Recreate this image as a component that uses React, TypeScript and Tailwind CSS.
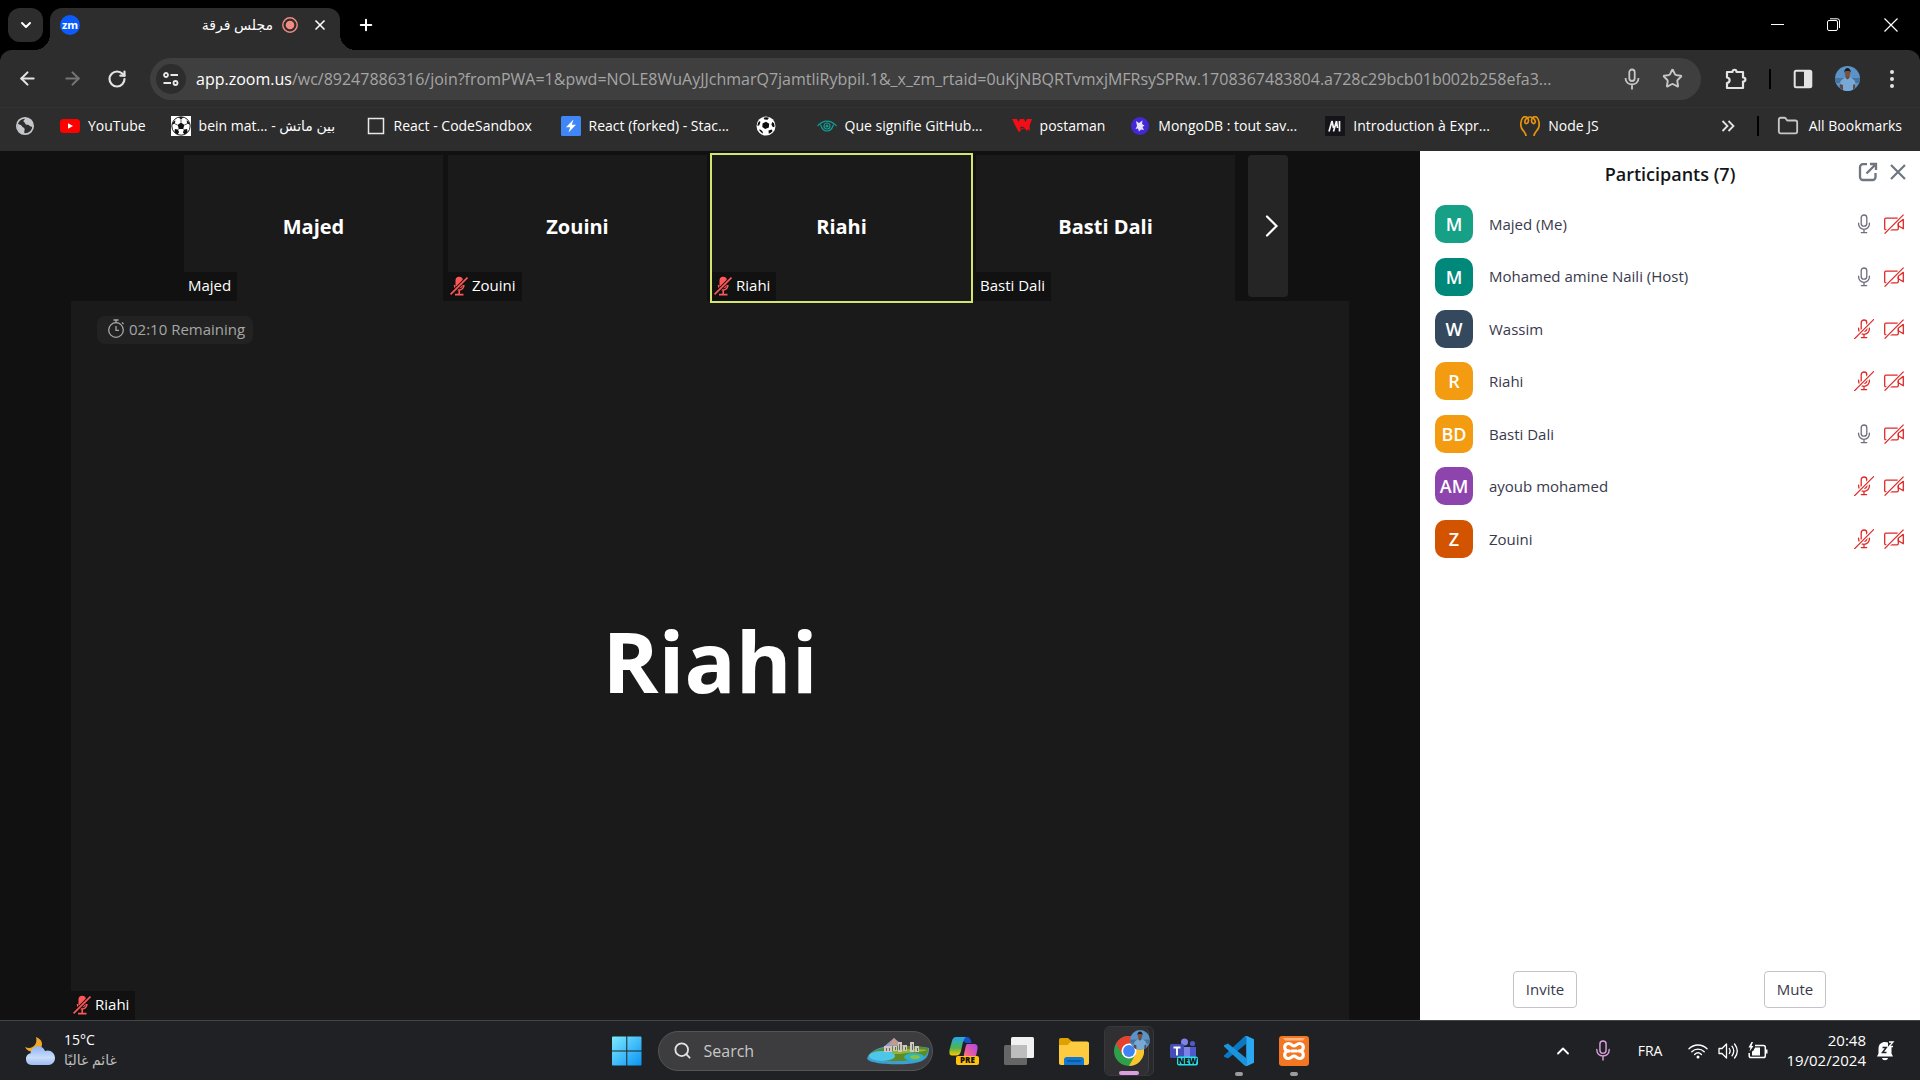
import type { ReactNode } from "react";
import { ArrowLeft, ArrowRight, ChevronDown, ChevronUp, Folder, Plus, RotateCw, Search, Star, X } from "lucide-react";

const UI = "font-['Open_Sans','DejaVu_Sans',sans-serif]";

/* ---------- small drawings ---------- */

function BoxedSoccer() {
  return (
    <svg viewBox="0 0 20 20" className="size-5">
      <rect width="20" height="20" fill="#fff" />
      <circle cx="10" cy="10" r="9.200" fill="#fff" stroke="#1b1b1b" strokeWidth="1" />
      <g fill="#111">
        <path d="M10 6.400l3.400 2.500-1.300 4H7.900l-1.300-4z" />
        <path d="M7.400 1.400L10 3.200l2.600-1.800C11 .7 9 .7 7.400 1.400zM1 8.600l2.800-.8.6-3.400C2.400 5.400 1.200 7 1 8.600zM19 8.600l-2.800-.8-.6-3.400c2 1 3.200 2.600 3.400 4.200zM3.500 16l.4-2.900 3 .4 1.200 2.800-1.600 2.100c-1.200-.5-2.300-1.300-3-2.400zM16.500 16l-.4-2.900-3 .4-1.200 2.800 1.600 2.100c1.200-.5 2.300-1.300 3-2.400z" />
      </g>
      <path d="M10 3.200v3.200M3.800 7.800l2.800 1.100M16.200 7.800l-2.800 1.100M6.900 13.500l1-.6M13.100 13.500l-1-.6" stroke="#333" strokeWidth=".8" />
    </svg>
  );
}

function Soccer() {
  return (
    <svg viewBox="0 0 20 20" className="size-5">
      <circle cx="10" cy="10" r="9.500" fill="#fff" />
      <g fill="#0c0c0c">
        <path d="M6.500 7.500l3.500-1.700 3.200 2-.4 3.700-3.600 1.500-2.900-2z" />
        <path d="M7.500 1.800c1.800-.8 4-.7 5.500 0L11.500 3.800 8.500 3.600zM16.200 6l1.800 1.200.7 3.300-1.700.8-1.600-2.500zM12.500 14.500l3.200-1 .8 1.500c-1 1.400-2.300 2.300-3.700 2.800zM3.800 13.200l2.500 1.800.8 2.500C5.500 16.900 4 15.500 3.200 14zM3.200 5.200l1.300.5-1.200 3.500-1.800.8c0-1.800.6-3.500 1.700-4.800z" />
      </g>
    </svg>
  );
}

function Globe() {
  return (
    <svg viewBox="0 0 20 20" className="size-5">
      <circle cx="10" cy="10" r="8.200" fill="none" stroke="#c4c7cc" strokeWidth="1.700" />
      <path d="M2.500 7.500C4 9 6.500 8.500 7 10.200c.4 1.500 2.600 1 2.600 2.800 0 1.300-.5 2.200-.2 4.600C5 17.500 2 14 2.500 7.500zM10.500 2c-.5 1.500-2 1.800-2 3.200 0 1.300 1.600.9 1.600 2 0 1 1.200 1.500 2.800 1.500 1.200 0 1.600 1.500 3 1.800l2 .5C18 6 15 2.500 10.500 2z" fill="#c4c7cc" />
    </svg>
  );
}

function Person({ className }: { className?: string }) {
  return (
    <svg viewBox="0 0 25 25" className={className}>
      <defs>
        <clipPath id="face"><circle cx="12.500" cy="12.500" r="12.500" /></clipPath>
      </defs>
      <g clipPath="url(#face)">
        <rect width="25" height="25" fill="#5b93c8" />
        <rect y="12" width="25" height="5" fill="#47739c" />
        <path d="M4 25l1.500-10 5-4h5l4.500 4 1.500 10z" fill="#78a9d6" />
        <path d="M4 25l1-7 3 1v6zM21 25l-1-7-2 1v6z" fill="#5a4a48" />
        <path d="M10.500 9h4v3l-2 1.500-2-1.500z" fill="#704a3a" />
        <ellipse cx="12.500" cy="6.500" rx="2.800" ry="3.800" fill="#7a5240" />
        <path d="M9.200 6.500c0-6 6.600-6 6.600 0l-1.300-1.500h-4z" fill="#1d1a1d" />
      </g>
    </svg>
  );
}

function Mic({ muted }: { muted: boolean }) {
  return (
    <svg viewBox="0 0 20 20" className="size-5" fill="none" stroke={muted ? "#e02828" : "#6e6e7d"} strokeWidth="1.300" strokeLinecap="round">
      <rect x="7.200" y="1" width="5.600" height="11.200" rx="2.800" />
      <path d="M4.600 9.200v.8a5.400 5.400 0 0 0 10.800 0v-.8M10 15.400v3M7.300 18.600h5.400" />
      {muted && <path d="M.8 19.400L19.600.6" stroke="#fff" strokeWidth="3.400" />}
      {muted && <path d="M.6 19.600L19.600.6" />}
    </svg>
  );
}

function CamOff() {
  return (
    <svg viewBox="0 0 20 20" className="size-5" fill="none" stroke="#e02828" strokeWidth="1.300" strokeLinejoin="round">
      <rect x=".7" y="4.200" width="13.600" height="11.600" rx="1.200" />
      <path d="M14.300 9l5-3.600v9.400l-5-3z" />
      <path d="M1.200 19.200L19.400 1" stroke="#fff" strokeWidth="3.400" />
      <path d="M.6 19.600L19.600.6" />
    </svg>
  );
}

function MutedSolid() {
  return (
    <svg viewBox="0 0 18 20" className="h-5 w-[18px] shrink-0">
      <g fill="none" stroke="#ff5757" strokeWidth="1.600">
        <rect x="5.500" y=".8" width="7.400" height="11.500" rx="3.700" fill="#ff5757" stroke="none" />
        <path d="M4.500 9c0 6.600 9.400 6.600 9.400 0M9.200 14v4.200M5 18.600h8.500" />
        <path d="M.5 18.500L17.500 1.500" stroke="#111" strokeWidth="3.600" />
        <path d="M.6 18.400L17.500 1.500" strokeWidth="1.700" />
      </g>
    </svg>
  );
}

/* ---------- browser chrome ---------- */

type Mark = { label?: string; icon: ReactNode; long?: boolean };

const bookmarks: Mark[] = [
  {
    label: "YouTube",
    icon: (
      <svg viewBox="0 0 20 20" className="size-5"><rect y="3" width="20" height="14" rx="3.500" fill="#f00" /><path d="M8 7.200v5.600l5-2.800z" fill="#fff" /></svg>
    ),
  },
  { label: "bein mat... - بين ماتش", icon: <BoxedSoccer />, long: true },
  {
    label: "React - CodeSandbox",
    long: true,
    icon: <svg viewBox="0 0 20 20" className="size-5"><rect x="2.500" y="2.500" width="15" height="15" fill="none" stroke="#e8e8e8" strokeWidth="1.500" /></svg>,
  },
  {
    label: "React (forked) - Stac...",
    long: true,
    icon: <svg viewBox="0 0 20 20" className="size-5"><rect width="20" height="20" rx="1.500" fill="#3f86f7" /><path d="M12.500 3.500L5 11.200h4.200L7.500 16.500 15 8.800h-4.200z" fill="#fff" /></svg>,
  },
  { icon: <Soccer /> },
  {
    label: "Que signifie GitHub...",
    long: true,
    icon: (
      <svg viewBox="0 0 20 20" className="size-5" fill="none" stroke="#0f9f94" strokeWidth="1.200">
        <path d="M.5 10C4 6.200 6.500 5.200 10 5.200s6 1 9.500 4.800M3.500 8.500c1 3.500 3.500 6.500 6.500 6.500s5.500-3 6.500-6.500" /><circle cx="10" cy="10" r="3" /><circle cx="10" cy="10" r=".9" fill="#0f9f94" />
      </svg>
    ),
  },
  {
    label: "postaman",
    icon: <svg viewBox="0 0 20 20" className="size-5"><path d="M0 3h5l1.500 3L8 3h4l1.500 3L15 3h5l-2.500 7 .5 5-2-2-1 2.500c-2-4.500-5-3.500-8 1L3.500 10z" fill="#f20d17" /><path d="M8 11.500c1.500-1.500 4.500-1 5 1.500-1.500-1.500-3.500-1.500-5 .5z" fill="#2d2d2d" /></svg>,
  },
  {
    label: "MongoDB : tout sav...",
    long: true,
    icon: <svg viewBox="0 0 20 20" className="size-5"><circle cx="10" cy="10" r="9" fill="#4427d6" /><path d="M6 5l3 2 3.500-2.500L12 8l2.500 1.500-2 1.500 1.500 3-3-.5-2 2-1-3-2.500.5 1.500-3z" fill="#e9e2ff" /></svg>,
  },
  {
    label: "Introduction à Expr...",
    long: true,
    icon: <svg viewBox="0 0 20 20" className="size-5"><rect width="20" height="20" fill="#15141a" /><path d="M4 15.500L7 5M8.500 15.500L11.500 5M14.500 5v10.500M7 5l1.500 7M11.500 5l1 7" stroke="#f4f4f4" strokeWidth="1.700" fill="none" /></svg>,
  },
  {
    label: "Node JS",
    icon: (
      <svg viewBox="0 0 20 20" className="size-5" fill="none" stroke="#e8930c" strokeWidth="1.700">
        <path d="M6 20c0-3-3-5-4.500-8C.3 9 .6 4 3 1.500 5-.5 8.500 1 8.500 4.500S5 8.500 4.800 6 7.500 1 10 1s5.500 2.500 5.200 5-3.700 2-3.700-1.500S15-.5 17 1.500C19.400 4 19.700 9 18.500 12c-1.500 3-4.500 5-4.500 8" />
      </svg>
    ),
  },
];

function TabStrip() {
  return (
    <header className="flex h-[50px] items-start bg-black pl-2 text-white">
      <button aria-label="Search tabs" className="mt-2 flex h-[34px] w-[35px] items-center justify-center rounded-xl bg-[#2d2d2d]">
        <ChevronDown className="size-4" strokeWidth={3} />
      </button>
      <div className="relative mt-2 ml-[7px] flex h-[42px] w-[290px] items-center rounded-t-xl bg-[#2d2d2d] pr-3 pl-[10px] pb-2">
        <span className="absolute bottom-0 -left-4 size-4 bg-[radial-gradient(circle_at_0_0,transparent_16px,#2d2d2d_16px)]" />
        <span className="absolute -right-4 bottom-0 size-4 bg-[radial-gradient(circle_at_100%_0,transparent_16px,#2d2d2d_16px)]" />
        <span className="flex size-5 items-center justify-center rounded-full bg-[#0b5cff] pb-0.5 text-[11px] leading-none font-bold">zm</span>
        <span dir="rtl" className="flex-1 text-sm">مجلس فرقة</span>
        <svg viewBox="0 0 16 16" className="ml-[9px] size-4"><circle cx="8" cy="8" r="7.200" fill="none" stroke="#f28b82" strokeWidth="1.400" /><circle cx="8" cy="8" r="4.300" fill="#f28b82" /></svg>
        <button aria-label="Close tab" className="ml-[14px]"><X className="size-4" strokeWidth={2.500} /></button>
      </div>
      <button aria-label="New tab" className="mt-[15px] ml-4 flex size-5 items-center justify-center"><Plus className="size-[18px]" strokeWidth={2.700} /></button>
      <div className="ml-auto flex h-[50px]">
        <button aria-label="Minimize" className="flex w-14 items-center justify-center"><svg viewBox="0 0 14 14" className="size-[14px]"><path d="M0 6.500h13" stroke="#fff" /></svg></button>
        <button aria-label="Restore" className="flex w-14 items-center justify-center"><svg viewBox="0 0 14 14" className="size-[14px]" fill="none" stroke="#fff"><rect x=".5" y="2.500" width="10" height="10" rx="1.500" /><path d="M3 .8h7.500a2 2 0 0 1 2 2V10" /></svg></button>
        <button aria-label="Close" className="flex w-[58px] items-center justify-center"><svg viewBox="0 0 14 14" className="size-[14px]"><path d="M.5.5l13 13M13.500.5l-13 13" stroke="#fff" strokeWidth="1.200" /></svg></button>
      </div>
    </header>
  );
}

function Toolbar() {
  return (
    <div className="bg-black">
      <div className="flex h-[58px] items-center rounded-t-xl border-b border-[#333] bg-[#2d2d2d] pl-[17px] text-[#e3e3e3]">
        <button aria-label="Back"><ArrowLeft className="size-[21px]" strokeWidth={2.400} /></button>
        <button aria-label="Forward" className="ml-6 text-[#757575]"><ArrowRight className="size-[21px]" strokeWidth={2.400} /></button>
        <button aria-label="Reload" className="ml-6"><RotateCw className="size-[20px]" strokeWidth={2.600} /></button>
        <div className="ml-[23px] flex h-[42px] min-w-0 flex-1 items-center rounded-full bg-[#3f3f3f] pr-[18px] pl-1.5">
          <button aria-label="Site information" className="flex size-[30px] shrink-0 items-center justify-center rounded-full bg-[#2d2d2d]">
            <svg viewBox="0 0 16 16" className="size-4" fill="none" stroke="#e8e8e8" strokeWidth="1.800"><circle cx="3" cy="4" r="2" /><path d="M7.500 4H15M.5 12H8" /><circle cx="12.500" cy="12" r="2" /></svg>
          </button>
          <label htmlFor="address" className="ml-[10px] text-base text-white">app.zoom.us</label>
          <input
            id="address"
            className="min-w-0 flex-1 bg-transparent text-base text-[#a5a5a5] outline-none text-ellipsis"
            defaultValue="/wc/89247886316/join?fromPWA=1&pwd=NOLE8WuAyJJchmarQ7jamtliRybpiI.1&_x_zm_rtaid=0uKjNBQRTvmxjMFRsySPRw.1708367483804.a728c29bcb01b002b258efa3..."
          />
          <button aria-label="Voice search" className="ml-[10px]">
            <svg viewBox="0 0 20 22" className="h-[22px] w-5" fill="none" stroke="#c7c7c7" strokeWidth="1.800"><rect x="7.300" y="1.500" width="5.400" height="11.500" rx="2.700" /><path d="M3.500 10c0 8.500 13 8.500 13 0M10 16.500v5" /></svg>
          </button>
          <button aria-label="Bookmark this tab" className="ml-5 text-[#c7c7c7]"><Star className="size-[21px]" strokeWidth={2.200} /></button>
        </div>
        <button aria-label="Extensions" className="ml-6">
          <svg viewBox="0 0 22 22" className="size-[22px]" fill="none" stroke="#e3e3e3" strokeWidth="2.200" strokeLinejoin="round"><path d="M2 4h5.500c0-3 4-3 4 0H18v5.500c3.200 0 3.200 4 0 4V20H2v-5c3.500-.5 3.500-5 0-5.500z" /></svg>
        </button>
        <span className="ml-[22px] h-5 w-0.5 bg-black" />
        <button aria-label="Side panel" className="ml-[22px]">
          <svg viewBox="0 0 20 20" className="size-5"><rect x="1.700" y="1.700" width="16.600" height="16.600" rx="1.500" fill="none" stroke="#e3e3e3" strokeWidth="2" /><rect x="11" y="2" width="7" height="16" fill="#e3e3e3" /></svg>
        </button>
        <button aria-label="Profile" className="ml-[22px]"><Person className="size-[25px]" /></button>
        <button aria-label="Menu" className="mr-[18px] ml-[22px]">
          <svg viewBox="0 0 20 20" className="size-5" fill="#e3e3e3"><circle cx="10" cy="3" r="2" /><circle cx="10" cy="10" r="2" /><circle cx="10" cy="17" r="2" /></svg>
        </button>
      </div>
    </div>
  );
}

function BookmarkBar() {
  return (
    <nav className="flex h-[43px] items-center bg-[#2d2d2d] pb-2 pl-[15px] text-sm whitespace-nowrap text-white">
      <a href="#globe" aria-label="Bookmark"><Globe /></a>
      <div className="ml-[25px] flex items-center gap-[25px]">
        {bookmarks.map((b, i) => (
          <a key={i} href="#bookmark" aria-label={b.label ?? "Football"} className={b.label ? "flex items-center gap-2" : "flex items-center pr-4"}>
            {b.icon}
            {b.label && <span className={b.long ? "w-[142px]" : ""}>{b.label}</span>}
          </a>
        ))}
      </div>
      <button aria-label="More bookmarks" className="ml-auto">
        <svg viewBox="0 0 14 14" className="size-[14px]" fill="none" stroke="#e3e3e3" strokeWidth="1.800"><path d="M1.500 2l5 5-5 5M7.500 2l5 5-5 5" /></svg>
      </button>
      <span className="ml-[22px] h-5 w-0.5 bg-black" />
      <a href="#all" className="mr-[18px] ml-[18px] flex items-center gap-[10px]">
        <Folder className="size-[22px] text-[#c7c7c7]" />
        <span>All Bookmarks</span>
      </a>
    </nav>
  );
}

/* ---------- meeting ---------- */

function NameTag({ name, muted }: { name: string; muted?: boolean }) {
  return (
    <div className={`absolute bottom-0 left-0 flex h-[29px] items-center gap-1 bg-[#111] pr-1.5 pb-0.5 text-[15px] text-white ${muted ? "pl-0.5" : "pl-1"}`}>
      {muted && <MutedSolid />}
      <span>{name}</span>
    </div>
  );
}

const tiles = [
  { name: "Majed" },
  { name: "Zouini", muted: true },
  { name: "Riahi", muted: true, active: true },
  { name: "Basti Dali" },
];

function Stage() {
  return (
    <main className="flex min-w-0 flex-1 flex-col bg-[#111] px-[71px] pt-1 text-white">
      <div className="flex h-[146px] shrink-0 pl-[113px]">
        <div className="flex gap-[5px]">
          {tiles.map((t) => (
            <section key={t.name} className={`relative flex w-[259px] items-center justify-center bg-[#1a1a1a] pb-0.5 text-xl font-bold ${t.active ? "z-10 outline-2 outline-[#d3e46f]" : ""}`}>
              {t.name}
              <div className="font-normal"><NameTag name={t.name} muted={t.muted} /></div>
            </section>
          ))}
        </div>
        <button aria-label="Next participants" className="ml-[13px] flex h-[142px] w-10 items-center justify-center rounded bg-[#252525]">
          <svg viewBox="0 0 14 22" className="ml-2 h-[22px] w-[14px]" fill="none" stroke="#fff" strokeWidth="2.200" strokeLinecap="round"><path d="M2 1.500L11.500 11 2 20.500" /></svg>
        </button>
      </div>
      <section className="relative flex flex-1 items-center justify-center bg-[#1a1a1a]">
        <div className="absolute top-[15px] left-[26px] flex h-7 items-center gap-1 rounded-lg bg-[#222] pr-2 pb-0.5 pl-2.5 text-[15px] text-[#a6a6a6]">
          <svg viewBox="0 0 18 20" className="h-5 w-[18px]" fill="none" stroke="#a6a6a6" strokeWidth="1.300"><circle cx="9" cy="11" r="7.300" /><path d="M6.500 1h5M9 1v3M15 3.500l1.500 1.500M9 7v4.300h3" /></svg>
          <span>02:10 Remaining</span>
        </div>
        <h1 className="text-[85px] leading-none font-bold">Riahi</h1>
        <NameTag name="Riahi" muted />
      </section>
    </main>
  );
}

const people = [
  { initials: "M", name: "Majed (Me)", color: "bg-[#16a085]", muted: false },
  { initials: "M", name: "Mohamed amine Naili (Host)", color: "bg-[#00897b]", muted: false },
  { initials: "W", name: "Wassim", color: "bg-[#34495e]", muted: true },
  { initials: "R", name: "Riahi", color: "bg-[#f39c12]", muted: true },
  { initials: "BD", name: "Basti Dali", color: "bg-[#f39c12]", muted: false },
  { initials: "AM", name: "ayoub mohamed", color: "bg-[#8e44ad]", muted: true },
  { initials: "Z", name: "Zouini", color: "bg-[#d35400]", muted: true },
];

function Participants() {
  return (
    <aside className="flex w-[500px] shrink-0 flex-col bg-white text-[#39394d]">
      <div className="relative flex h-[47px] items-center justify-center pb-0.5">
        <h2 className="text-lg font-semibold text-[#131619]">Participants (7)</h2>
        <div className="absolute top-[11px] right-[14px] flex items-center gap-3">
          <button aria-label="Pop out">
            <svg viewBox="0 0 20 20" className="size-5" fill="none" stroke="#6e7680" strokeWidth="2.300"><path d="M9 2.200H5a3 3 0 0 0-3 3V15a3 3 0 0 0 3 3h9.500a3 3 0 0 0 3-3v-4" /><path d="M12 2h6v6M18 2l-9.500 9.500" /></svg>
          </button>
          <button aria-label="Close panel">
            <svg viewBox="0 0 16 16" className="size-4" stroke="#6e7680" strokeWidth="2.200"><path d="M1 1l14 14M15 1L1 15" /></svg>
          </button>
        </div>
      </div>
      <ul className="grid h-[367px] grid-rows-7 pr-4 pl-[15px]">
        {people.map((p) => (
          <li key={p.name} className="flex items-center">
            <span className={`flex size-[38px] items-center justify-center rounded-[10px] text-lg font-semibold text-white ${p.color}`}>{p.initials}</span>
            <span className="ml-4 text-[15px]">{p.name}</span>
            <span className="ml-auto flex gap-2.5">
              <Mic muted={p.muted} />
              <CamOff />
            </span>
          </li>
        ))}
      </ul>
      <div className="mt-auto mb-3 grid grid-cols-2 justify-items-center text-[15px]">
        <button className="h-[37px] rounded border border-[#c4c4c8] px-3">Invite</button>
        <button className="h-[37px] rounded border border-[#c4c4c8] px-3">Mute</button>
      </div>
    </aside>
  );
}

/* ---------- taskbar ---------- */

function WeatherIcon() {
  return (
    <svg viewBox="0 0 30 30" className="size-[30px]">
      <defs><linearGradient id="cloud" x1="0" y1="0" x2="0" y2="1"><stop offset="0" stopColor="#8db4f5" /><stop offset=".6" stopColor="#c9dcf9" /><stop offset="1" stopColor="#9dbcf0" /></linearGradient></defs>
      <path d="M11 1c6 2 8 8 4 12S3 17 0 11c7 3 13-2 11-10z" fill="#f2a526" />
      <path d="M6.500 29a6 6 0 0 1-1-11.800C7 8.500 18 8.500 20 15c5-2 10 2 10 7 0 4-3 7-6.500 7z" fill="url(#cloud)" />
    </svg>
  );
}

function Landscape() {
  return (
    <svg viewBox="0 0 62 28" className="h-7 w-[62px]">
      <path d="M14 12L27 1l13 11z" fill="#8d9cc4" /><path d="M22 8l5-7 6 7z" fill="#c99a86" />
      <path d="M0 21C3 14 12 9 26 9s28 0 36 2c0 8-3 12-10 14-12 4-52 3-52-4z" fill="#3b9fd6" />
      <path d="M1 19C8 9 36 7 61 11c0 7-3 9-8 10-12 4-45 5-52-2z" fill="#5f8a26" />
      <path d="M20 15c10-3 28-4 40-2-4 2-12 2-20 3-6 1-14 2-20-1z" fill="#8fb53a" />
      <ellipse cx="15" cy="19" rx="13" ry="5" fill="#4cc7ea" />
      <ellipse cx="47" cy="20" rx="10" ry="4" fill="#2bb3c6" /><ellipse cx="48" cy="20" rx="5" ry="2" fill="#8bbf45" />
      <path d="M17 9h8v6h-8zM31 5h4v10h-4zM36 8h4v6h-4zM43 5h4v10h-4zM48 9h4v6h-4zM26 9h4v5h-4z" fill="#cfc7c0" />
      <path d="M19 11h1v3h-1zM22 11h1v3h-1zM32 7h1v6h-1zM45 7h1v6h-1zM38 10h1v3h-1zM28 10h1v3h-1zM50 11h1v3h-1z" fill="#6b6466" />
    </svg>
  );
}

const taskIcon = "size-[30px]";

function CopilotIcon() {
  return (
    <svg viewBox="0 0 30 30" className={taskIcon}>
      <defs>
        <linearGradient id="cpa" x1="0" y1="0" x2="0" y2="1"><stop offset="0" stopColor="#22a6f2" /><stop offset=".6" stopColor="#52b44b" /><stop offset="1" stopColor="#ffc800" /></linearGradient>
        <linearGradient id="cpb" x1="1" y1="0" x2="0" y2="1"><stop offset="0" stopColor="#a34be8" /><stop offset=".6" stopColor="#ee5aa0" /><stop offset="1" stopColor="#ff9550" /></linearGradient>
      </defs>
      <path d="M14 1h4c3 0 4 3 4.500 6H17l-3-2z" fill="#1450c8" />
      <path d="M7 1h10c-3 2-3.500 8-5 14-.8 3-2 4.500-5 4.500H3C0 19.500 0 16 1 12l2-7c.7-2.500 2-4 4-4z" fill="url(#cpa)" />
      <path d="M18 8h7c3 0 4 2 3.500 5L27 20c-.6 2.500-2 4-4 4h-7c-2-3-1-6 0-10 .6-3.500 1-5 2-6z" fill="url(#cpb)" />
      <rect x="7" y="20" width="23" height="9" rx="2" fill="#ffc20e" />
      <text x="18.500" y="27.400" fontSize="8" fontWeight="800" textAnchor="middle" fill="#111">PRE</text>
    </svg>
  );
}

function TaskViewIcon() {
  return (
    <svg viewBox="0 0 30 30" className={taskIcon}>
      <rect x="7" y="1" width="23" height="21" rx="1.500" fill="#f1f1f1" /><rect y="9" width="23" height="20" rx="1.500" fill="#666" /><rect x="7" y="9" width="16" height="13" fill="#bdbdbd" />
    </svg>
  );
}

function ExplorerIcon() {
  return (
    <svg viewBox="0 0 30 30" className={taskIcon}>
      <path d="M0 4c0-1.200.8-2 2-2h7l4 3.500V12H0z" fill="#e0a100" />
      <path d="M0 9h8.500L12 5.500h16c1.200 0 2 .8 2 2V27c0 1.200-.8 2-2 2H2c-1.200 0-2-.8-2-2z" fill="#fdcb3f" />
      <path d="M5 29v-5c0-1.700 1-3 3-3h14c2 0 3 1.300 3 3v5z" fill="#1376cf" /><path d="M8 25h14" stroke="#0b4f96" strokeWidth="1.300" />
    </svg>
  );
}

function ChromeIcon() {
  return (
    <svg viewBox="0 0 30 30" className={taskIcon}>
      <circle cx="15" cy="15" r="15" fill="#2ea04b" />
      <path d="M2 7.500A15 15 0 0 1 28 7.500H15L8.500 18.700z" fill="#e8402f" />
      <path d="M28 7.500A15 15 0 0 1 15 30l6.300-11.300L15 7.500z" fill="#fdc52c" />
      <circle cx="15" cy="15" r="7.500" fill="#fff" /><circle cx="15" cy="15" r="5.900" fill="#3f84f2" />
    </svg>
  );
}

function TeamsIcon() {
  return (
    <svg viewBox="0 0 30 30" className={taskIcon}>
      <circle cx="15.500" cy="6" r="3.500" fill="#7b83eb" /><circle cx="23.500" cy="7.500" r="2.600" fill="#5059c9" />
      <path d="M19 11h8v9c0 3-2 5-5 5h-3z" fill="#5059c9" /><path d="M9 11h12v10c0 4-12 5-12 0z" fill="#7b83eb" />
      <rect x="1" y="8" width="14" height="14" rx="1.500" fill="#454db8" />
      <path d="M4.500 11.500h7M8 11.500v8" stroke="#fff" strokeWidth="1.900" />
      <rect x="8" y="20.500" width="21" height="9" rx="2" fill="#25dfe5" />
      <text x="18.500" y="27.800" fontSize="8" fontWeight="800" textAnchor="middle" fill="#111">NEW</text>
    </svg>
  );
}

function CodeIcon() {
  return (
    <svg viewBox="0 0 30 30" className={taskIcon}>
      <path d="M22 0v8L4 22.500 0 20.800v-1.300L20.500.5z" fill="#0b78c4" /><path d="M22 30v-8L4 7.500 0 9.200v1.300L20.500 29.500z" fill="#1b93dd" />
      <path d="M20.500.5L23 0l7 3.300v23.400L23 30l-2.500-.5c1 .2 1.700-.4 1.700-1.500V2c0-1.100-.7-1.700-1.700-1.500z" fill="#29a9f2" />
    </svg>
  );
}

function XamppIcon() {
  return (
    <svg viewBox="0 0 30 30" className={taskIcon}>
      <rect width="30" height="30" rx="3" fill="#f37623" /><path d="M4 2h22l-2 2.500H6z" fill="#ffb684" />
      <path d="M10.500 15C4 15 4.500 7.500 9.500 7.500c3 0 3.500 2.500 5.500 2.500s2.500-2.500 5.500-2.500c5 0 5.500 7.500-1 7.500 6.500 0 6 7.500 1 7.500-3 0-3.500-2.500-5.500-2.500s-2.500 2.500-5.500 2.500c-5 0-5.500-7.500 1-7.500zM12 15h6" fill="none" stroke="#fff" strokeWidth="3.200" strokeLinejoin="round" />
    </svg>
  );
}

const apps = [
  { name: "Copilot", icon: <CopilotIcon />, bar: "" },
  { name: "Task view", icon: <TaskViewIcon />, bar: "" },
  { name: "File Explorer", icon: <ExplorerIcon />, bar: "" },
  { name: "Chrome", icon: <ChromeIcon />, bar: "w-5 bg-[#dc9ee0]", active: true },
  { name: "Teams", icon: <TeamsIcon />, bar: "" },
  { name: "Visual Studio Code", icon: <CodeIcon />, bar: "w-2 bg-[#9c9c9c]" },
  { name: "XAMPP", icon: <XamppIcon />, bar: "w-2 bg-[#9c9c9c]" },
];

function Taskbar() {
  return (
    <footer className="grid h-[60px] shrink-0 grid-cols-[1fr_auto_1fr] items-center border-t border-[#444547] bg-[#202124] text-white">
      <button className="flex items-center gap-[9px] pl-[25px] text-left">
        <WeatherIcon />
        <span className="pb-0.5 text-sm leading-5">
          <span className="block">15°C</span>
          <span className="block text-[#bdbdbd]">غائم غالبًا</span>
        </span>
      </button>

      <div className="flex items-center pl-[10px]">
        <button aria-label="Start">
          <svg viewBox="0 0 30 30" className="size-[30px]">
            <defs><linearGradient id="win" x1="0" y1="0" x2="1" y2="1"><stop offset="0" stopColor="#7deafd" /><stop offset="1" stopColor="#0a93f5" /></linearGradient></defs>
            <path d="M0 1.500C0 1 .5.500 1 .5h13.300v14H0zM15.300.5H28.500c.6 0 1 .4 1 1v13H15.300zM0 15.500h14.300v14H1c-.6 0-1-.4-1-1zM15.300 15.500h14.200v13c0 .6-.4 1-1 1H15.300z" fill="url(#win)" />
          </svg>
        </button>
        <div className="ml-4 flex h-10 w-[275px] items-center rounded-full border border-[#555556] bg-[#3d3d3f] pr-[3px] pl-[14px]">
          <Search className="size-[19px] text-[#e3e3e3]" strokeWidth={2.300} />
          <input type="search" aria-label="Search" placeholder="Search" className="ml-3 w-0 min-w-0 flex-1 bg-transparent text-base outline-none placeholder:text-[#c8c8c8]" />
          <Landscape />
        </div>
        <div className="ml-[6px] flex gap-[5px]">
          {apps.map((a) => (
            <button key={a.name} aria-label={a.name} className={`relative flex h-[50px] w-[50px] items-center justify-center rounded-md ${a.active ? "border border-[#38383b] bg-[#29292c]" : ""}`}>
              {a.active && <span className="absolute inset-y-0 left-0 w-11 rounded-md border-r border-[#414144] bg-[#303033]" />}
              <span className="relative">{a.icon}</span>
              {a.active && <Person className="absolute top-[3px] right-[3px] size-5" />}
              {a.bar && <span className={`absolute bottom-0 h-1 rounded-full ${a.bar}`} />}
            </button>
          ))}
        </div>
      </div>

      <div className="flex items-center justify-end pr-[25px]">
        <button aria-label="Hidden icons"><ChevronUp className="size-5" strokeWidth={2.200} /></button>
        <svg viewBox="0 0 16 22" className="ml-[22px] h-[21px] w-4" fill="none" stroke="#d9a0de" strokeWidth="1.500" strokeLinecap="round"><rect x="4.800" y="1" width="6.400" height="13" rx="3.200" /><path d="M1.500 10c0 9 13 9 13 0M8 17v4" /></svg>
        <button className="ml-[27px] text-sm">FRA</button>
        <div className="ml-[26px] flex items-center gap-2.5">
          <svg viewBox="0 0 20 16" className="h-4 w-5" fill="none" stroke="#fff" strokeWidth="1.400" strokeLinecap="round"><path d="M1 5.700c5-5 13-5 18 0M3.800 8.700c3.500-3.500 8.900-3.500 12.400 0M6.600 11.500c2-2 4.800-2 6.800 0" /><circle cx="10" cy="14" r="1.500" fill="#fff" stroke="none" /></svg>
          <svg viewBox="0 0 20 18" className="h-[18px] w-5" fill="none" stroke="#fff" strokeWidth="1.300" strokeLinejoin="round" strokeLinecap="round"><path d="M1 6.500h3L8.500 2v14L4 11.500H1zM11.300 6.500c1 1.500 1 3.500 0 5M14 4.200c2.200 3 2.200 6.600 0 9.600M16.600 2c3.300 4.300 3.300 9.700 0 14" /></svg>
          <svg viewBox="0 0 20 17" className="h-[17px] w-5" fill="none" stroke="#fff" strokeWidth="1.500"><path d="M7 3.500h8.500c1 0 1.800.8 1.800 1.800v8.400c0 1-.8 1.800-1.800 1.800H3c-1 0-1.800-.8-1.800-1.800V11" /><path d="M18.500 7.500v4" strokeWidth="2" /><path d="M4 9.500l1.500-1 1.500-3h5v8H4z" fill="#fff" stroke="none" /><path d="M3.500 0L.5 5.500h2L1.500 9.500l4-5.500H3.500L5 0z" fill="#fff" stroke="none" /></svg>
        </div>
        <time className="ml-[18px] pb-0.5 text-right text-[15px] leading-5"><span className="block">20:48</span><span className="block">19/02/2024</span></time>
        <svg viewBox="0 0 20 20" className="ml-[9px] size-5" fill="#fff">
          <path d="M2 15.500l1.500-3V8c0-5 3-7 6.500-7 1 0 2 .2 3 .6V6h3.500v6.500l1.500 3zM7 17h6c-.5 3-5.500 3-6 0z" />
          <path d="M7.500 6.500h3.800L7.500 11.500h4" fill="none" stroke="#202124" strokeWidth="1.500" /><path d="M14 1h4l-4 4.500h4" fill="none" stroke="#fff" strokeWidth="1.300" />
        </svg>
      </div>
    </footer>
  );
}

export default function App() {
  return (
    <div className={`flex h-screen flex-col overflow-hidden bg-black ${UI}`}>
      <TabStrip />
      <Toolbar />
      <BookmarkBar />
      <div className="flex min-h-0 flex-1">
        <Stage />
        <Participants />
      </div>
      <Taskbar />
    </div>
  );
}
